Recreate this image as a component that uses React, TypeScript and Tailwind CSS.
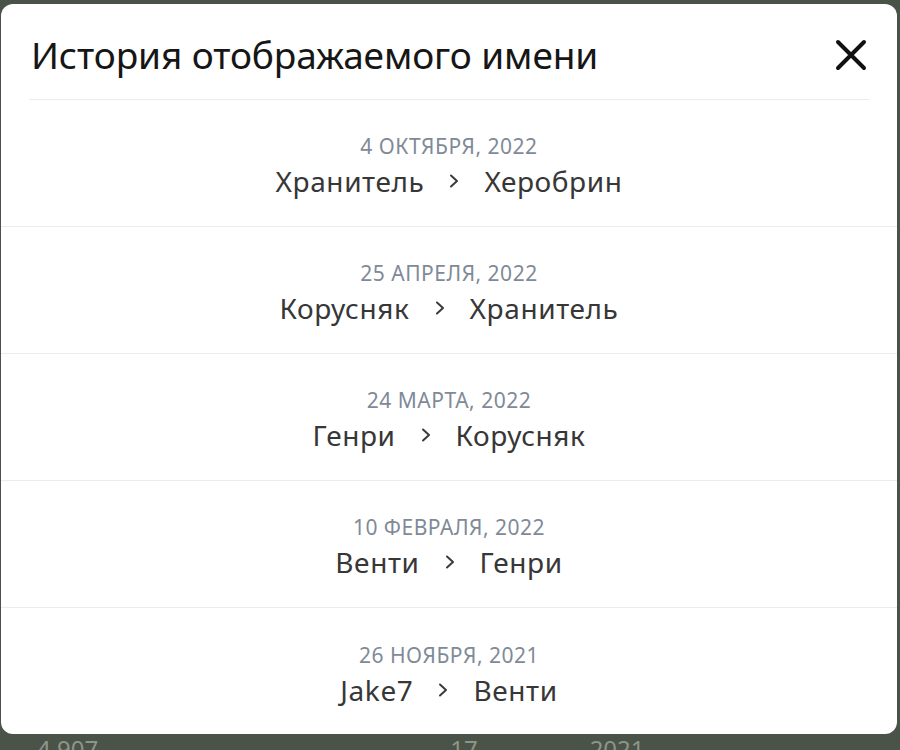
// Display-name history modal — white sheet over dim green-grey backdrop

const history = [
  { date: '4 октября, 2022', from: 'Хранитель', to: 'Херобрин' },
  { date: '25 апреля, 2022', from: 'Корусняк', to: 'Хранитель' },
  { date: '24 марта, 2022', from: 'Генри', to: 'Корусняк' },
  { date: '10 февраля, 2022', from: 'Венти', to: 'Генри' },
  { date: '26 ноября, 2021', from: 'Jake7', to: 'Венти' },
]

function Chevron() {
  return (
    <svg width="10" height="14" viewBox="0 0 10 14" fill="none" className="shrink-0">
      <path d="M2 1.5 L8 7 L2 12.5" stroke="#3a3a3a" strokeWidth="2" strokeLinecap="round" strokeLinejoin="round" />
    </svg>
  )
}

function CloseIcon() {
  return (
    <svg width="32" height="32" viewBox="0 0 32 32" fill="none">
      <path d="M3 3 L29 29 M29 3 L3 29" stroke="#111" strokeWidth="4" strokeLinecap="round" />
    </svg>
  )
}

export default function App() {
  return (
    <div className="relative h-[750px] w-[900px] overflow-hidden bg-[#4a5347]" style={{ fontFamily: '"Noto Sans", "Open Sans", sans-serif' }}>
      <div className="ml-[1px] mt-[4px] h-[730px] w-[896px] overflow-hidden rounded-[12px] bg-white">
        {/* Header */}
        <div className="mx-[28px] flex h-[96px] items-center justify-between border-b border-[#ececec] pl-[2px] pr-[4px] pt-[6px]">
          <h1 className="text-[37px] leading-none tracking-[-0.1px] text-[#161616]">История отображаемого имени</h1>
          <button className="-mr-[2px]">
            <CloseIcon />
          </button>
        </div>

        {/* Rows */}
        {history.map((h, i) => (
          <div
            key={h.date}
            className={`flex h-[127px] flex-col items-center justify-center gap-[7px] pt-[8px] ${i < history.length - 1 ? 'border-b border-[#ececec]' : ''}`}
          >
            <p className="text-[21px] uppercase leading-none tracking-[0.5px] text-[#7f8a98]">
              {h.date}
            </p>
            <div className="flex items-center gap-[25px] text-[28px] leading-[34px] tracking-[0.6px] text-[#373737]">
              <span>{h.from}</span>
              <Chevron />
              <span>{h.to}</span>
            </div>
          </div>
        ))}
      </div>

      {/* Background content peeking under the sheet */}
      <div className="absolute left-0 top-[737px] flex w-full text-[24px] leading-none text-[#8d958b]">
        <span className="ml-[37px]">4 907</span>
        <span className="ml-[352px]">17</span>
        <span className="ml-[112px]">2021</span>
      </div>
    </div>
  )
}
